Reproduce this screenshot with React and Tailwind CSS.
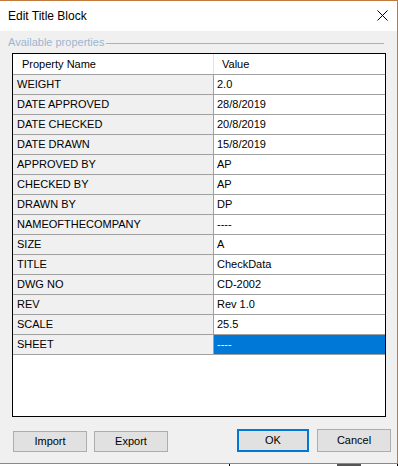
import React from "react";

const rows = [
  ["WEIGHT", "2.0"],
  ["DATE APPROVED", "28/8/2019"],
  ["DATE CHECKED", "20/8/2019"],
  ["DATE DRAWN", "15/8/2019"],
  ["APPROVED BY", "AP"],
  ["CHECKED BY", "AP"],
  ["DRAWN BY", "DP"],
  ["NAMEOFTHECOMPANY", "----"],
  ["SIZE", "A"],
  ["TITLE", "CheckData"],
  ["DWG NO", "CD-2002"],
  ["REV", "Rev 1.0"],
  ["SCALE", "25.5"],
  ["SHEET", "----"],
];

export default function App() {
  return (
    <div
      className="w-[398px] h-[466px] bg-white overflow-hidden text-black"
      style={{ fontFamily: '"Liberation Sans", Arial, sans-serif' }}
    >
      <div className="h-[464px] flex flex-col border-t border-r border-b border-[#c27a3c] bg-[#f0f0f0]">
        {/* Title bar */}
        <div className="h-[30px] bg-white flex items-start justify-between pl-[8px] pr-[9px]">
          <span className="mt-[8px] text-[12px] leading-[14px]">Edit Title Block</span>
          <svg className="mt-[9px]" width="11" height="11" viewBox="0 0 11 11">
            <path d="M0.5 0.5 L10.5 10.5 M10.5 0.5 L0.5 10.5" stroke="#000" strokeWidth="1" fill="none" />
          </svg>
        </div>

        {/* Body */}
        <div className="flex-1 flex flex-col">
          <div className="mt-[4px] h-[14px] flex items-start">
            <span className="pl-[8px] text-[11px] leading-[14px] text-[#9fb5cf] whitespace-nowrap">
              Available properties
            </span>
            <div className="mt-[8px] ml-[2px] mr-[13px] flex-1 h-px bg-[#b0b0b0]" />
          </div>

          <div className="mt-[4px] ml-[12px] w-[374px] h-[364px] border border-black bg-white flex flex-col text-[11px]">
            <div className="h-[21px] flex border-b border-[#a0a0a0] bg-white">
              <div className="w-[201px] border-r border-[#e3e3e3] pl-[9px] pt-[1px] leading-[19px]">
                Property Name
              </div>
              <div className="flex-1 pl-[8px] pt-[1px] leading-[19px]">Value</div>
            </div>
            {rows.map(([k, v], i) => {
              const sel = i === rows.length - 1;
              return (
                <div key={k} className="h-[20px] flex border-b border-[#a0a0a0]">
                  <div className="w-[201px] bg-[#f0f0f0] border-r border-[#a0a0a0] pl-[4px] leading-[19px]">
                    {k}
                  </div>
                  <div
                    className={
                      sel
                        ? "flex-1 pl-[3px] leading-[19px] bg-[#0078d7] text-white"
                        : "flex-1 pl-[3px] leading-[19px]"
                    }
                  >
                    {v}
                  </div>
                </div>
              );
            })}
          </div>

          <div className="mt-[12px] h-[23px] flex items-end text-[11px]">
            <button className="ml-[13px] w-[74px] h-[21px] bg-[#e1e1e1] border border-[#adadad] flex items-center justify-center">
              Import
            </button>
            <button className="ml-[7px] w-[74px] h-[21px] bg-[#e1e1e1] border border-[#adadad] flex items-center justify-center">
              Export
            </button>
            <button className="ml-[69px] w-[72px] h-[23px] bg-[#e1e1e1] border-2 border-[#0078d7] flex items-center justify-center">
              OK
            </button>
            <button className="ml-[8px] w-[74px] h-[23px] bg-[#e1e1e1] border border-[#adadad] flex items-center justify-center">
              Cancel
            </button>
          </div>
        </div>
      </div>
      <div className="h-[2px] flex bg-white">
        <div className="ml-[229px] w-px h-full bg-black" />
        <div className="ml-[107px] w-[24px] h-full bg-[#555]" />
        <div className="ml-[36px] w-px h-full bg-black" />
      </div>
    </div>
  );
}
